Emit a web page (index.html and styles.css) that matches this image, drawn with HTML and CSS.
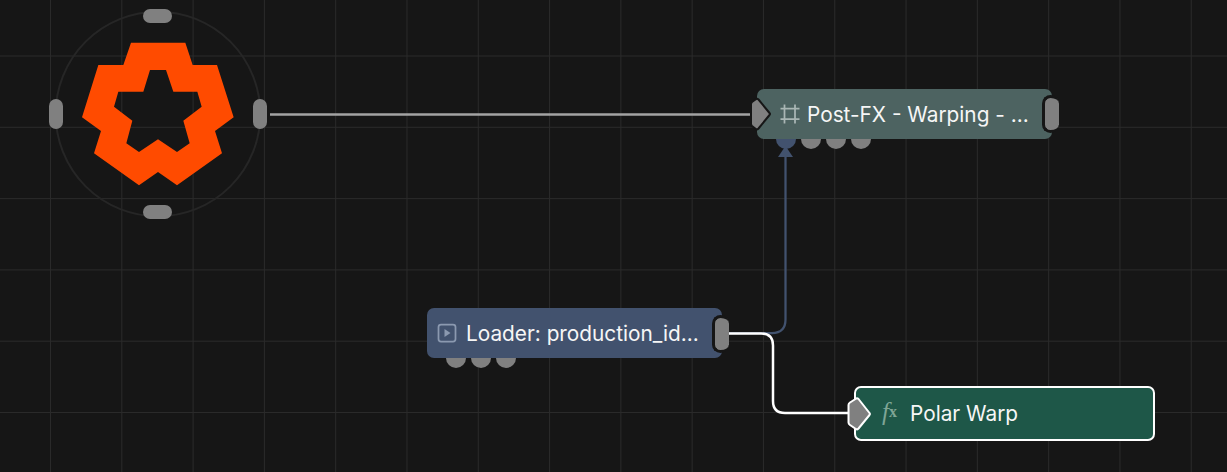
FILE: index.html
```html
<!DOCTYPE html>
<html lang="en">
<head>
<meta charset="utf-8">
<title>Node graph</title>
<link rel="stylesheet" href="styles.css">
</head>
<body>
<main class="canvas">
  <svg class="wires" width="1227" height="472" viewBox="0 0 1227 472" fill="none">
    <path class="wire-grey" d="M270 114.500H752"/>
    <path class="wire-blue" d="M722 333H772Q785.500 333 785.500 319.500V155"/>
    <path class="arrow-blue" d="M785.500 146L793 157H778Z"/>
    <path class="wire-white" d="M729 333.500H761Q773 333.500 773 345.500V401Q773 413 785 413H850"/>
  </svg>

  <div class="logo">
    <svg width="260" height="230" viewBox="0 0 780 690">
      <circle class="logo-ring" cx="384" cy="342" r="307"/>
      <path class="logo-mark" fill-rule="evenodd" d="M303 128H466L488 195H561L611 352L555 393L576 460L441 556L384 516L327 556L192 460L213 393L156 352L205 195H280ZM360 210L340 275H265L252 320L307 362L289 430L327 456L384 418L441 456L479 430L460 362L515 320L502 275H430L408 210Z"/>
    </svg>
    <span class="port pill-h logo-top"></span>
    <span class="port pill-h logo-bottom"></span>
    <span class="port pill-v logo-left"></span>
    <span class="port pill-v logo-right"></span>
  </div>

  <section class="node node-post">
    <div class="bumps"><i class="bump bump-blue"></i><i class="bump"></i><i class="bump"></i><i class="bump"></i></div>
    <div class="node-body body-post">
      <svg class="icon" width="20" height="20" viewBox="0 0 20 20" fill="none"><path d="M4.500 0.500V19.500M15 0.500V19.500M0.500 4.500H19.500M0.500 15H19.500"/></svg>
      <span class="label">Post-FX - Warping - ...</span>
    </div>
    <svg class="port-in" width="26" height="38" viewBox="0 0 26 38"><path d="M8.500 4.500Q10 3 11.500 4.500L22.500 18Q23.500 19 22.500 20L11.500 33.500Q10 35 8.500 33.800L5 31Q4 30 4 29V9Q4 8 5 7Z"/></svg>
    <span class="port-out"></span>
  </section>

  <section class="node node-loader">
    <div class="bumps"><i class="bump"></i><i class="bump"></i><i class="bump"></i></div>
    <div class="node-body body-loader">
      <svg class="icon" width="20" height="20" viewBox="0 0 20 20" fill="none"><rect x="1.500" y="1.500" width="17" height="17" rx="2.500"/><path class="icon-fill" d="M7.500 6L13.500 10L7.500 14Z"/></svg>
      <span class="label">Loader: production_id...</span>
    </div>
    <span class="port-out"></span>
  </section>

  <section class="node node-polar">
    <div class="node-body body-polar">
      <span class="fx">f<span class="fx-x">x</span></span>
      <span class="label">Polar Warp</span>
    </div>
    <svg class="port-in port-in-white" width="30" height="40" viewBox="0 0 30 40"><path d="M11.500 5Q13 3.500 14.500 5L25.500 19Q26.500 20 25.500 21L14.500 34.500Q13 36 11.500 34.800L6 31Q4.500 30 4.500 28.500V11Q4.500 9.500 6 8.500Z"/></svg>
  </section>
</main>
</body>
</html>
```
FILE: styles.css
```css
* { box-sizing: border-box; }
html, body { margin: 0; padding: 0; background: #161616; }
.canvas {
  position: relative;
  width: 1227px;
  height: 472px;
  overflow: hidden;
  background-color: #161616;
  background-image:
    linear-gradient(to right, #2a2a2a 1.25px, transparent 1.25px),
    linear-gradient(to bottom, #2a2a2a 1.25px, transparent 1.25px);
  background-size: 71.3px 71.3px;
  background-position: 50px 55.500px;
  font-family: Inter, "Liberation Sans", sans-serif;
}
.wires { position: absolute; left: 0; top: 0; }
.wire-grey { stroke: #a3a3a3; stroke-width: 2.500; }
.wire-blue { stroke: #42526e; stroke-width: 2.250; }
.arrow-blue { fill: #42526e; }
.wire-white { stroke: #fff; stroke-width: 2.500; }

.logo { position: absolute; left: 30px; top: 0; width: 260px; height: 230px; }
.logo svg { display: block; }
.logo-ring { fill: none; stroke: #262626; stroke-width: 6; }
.logo-mark { fill: #ff4b00; }
.port { position: absolute; background: #808080; border-radius: 8px; }
.pill-h { width: 29px; height: 14px; }
.pill-v { width: 14px; height: 30px; }
.logo-top { left: 113px; top: 9px; }
.logo-bottom { left: 113px; top: 205px; }
.logo-left { left: 19px; top: 99px; }
.logo-right { left: 223px; top: 99px; }

.node { position: absolute; }
.node-post { left: 757px; top: 89px; width: 295px; height: 50px; }
.node-loader { left: 427px; top: 308px; width: 295px; height: 50px; }
.node-polar { left: 854px; top: 386px; width: 301px; height: 55px; }
.node-body {
  position: relative;
  display: flex;
  align-items: center;
  gap: 8px;
  height: 100%;
  border-radius: 7px;
  color: #f6f6f6;
  font-size: 20.8px;
  white-space: nowrap;
}
.body-post { background: #4d6361; padding-left: 23px; gap: 7px; }
.body-loader { background: #42526e; padding-left: 10px; gap: 9px; }
.body-polar { background: #1e5748; border: 2.500px solid #fff; padding-left: 26px; gap: 8px; }
.label { line-height: 24px; position: relative; top: 0.5px; }
.icon { flex: none; stroke: #a9b6b4; stroke-width: 1.750; }
.body-loader .icon { stroke: #8b99b0; }
.icon-fill { fill: #8b99b0; stroke: none; }
.fx {
  font-family: "Liberation Serif", serif;
  font-style: italic;
  font-size: 25px;
  line-height: 24px;
  color: #7fa596;
  width: 20px;
}
.fx-x { font-style: normal; font-weight: 700; font-size: 16px; position: relative; top: -3px; }
.bumps { position: absolute; left: 19px; top: 40px; display: flex; gap: 5px; }
.bump { width: 20px; height: 20px; border-radius: 50%; background: #808080; }
.bump-blue { background: #42526e; }
.port-in { position: absolute; left: -10px; top: 6px; overflow: visible; }
.port-in path { fill: #808080; stroke: #161616; stroke-width: 2; stroke-linejoin: round; }
.port-in-white { left: -10px; top: 8px; }
.port-in-white path { stroke: #fff; stroke-width: 2; }
.port-out {
  position: absolute;
  right: -7px;
  top: 6px;
  width: 17px;
  height: 38px;
  background: #808080;
  border: 3px solid #161616;
  border-right: 0;
  border-radius: 9px;
}
.node-loader .port-out { top: 7px; }
```
